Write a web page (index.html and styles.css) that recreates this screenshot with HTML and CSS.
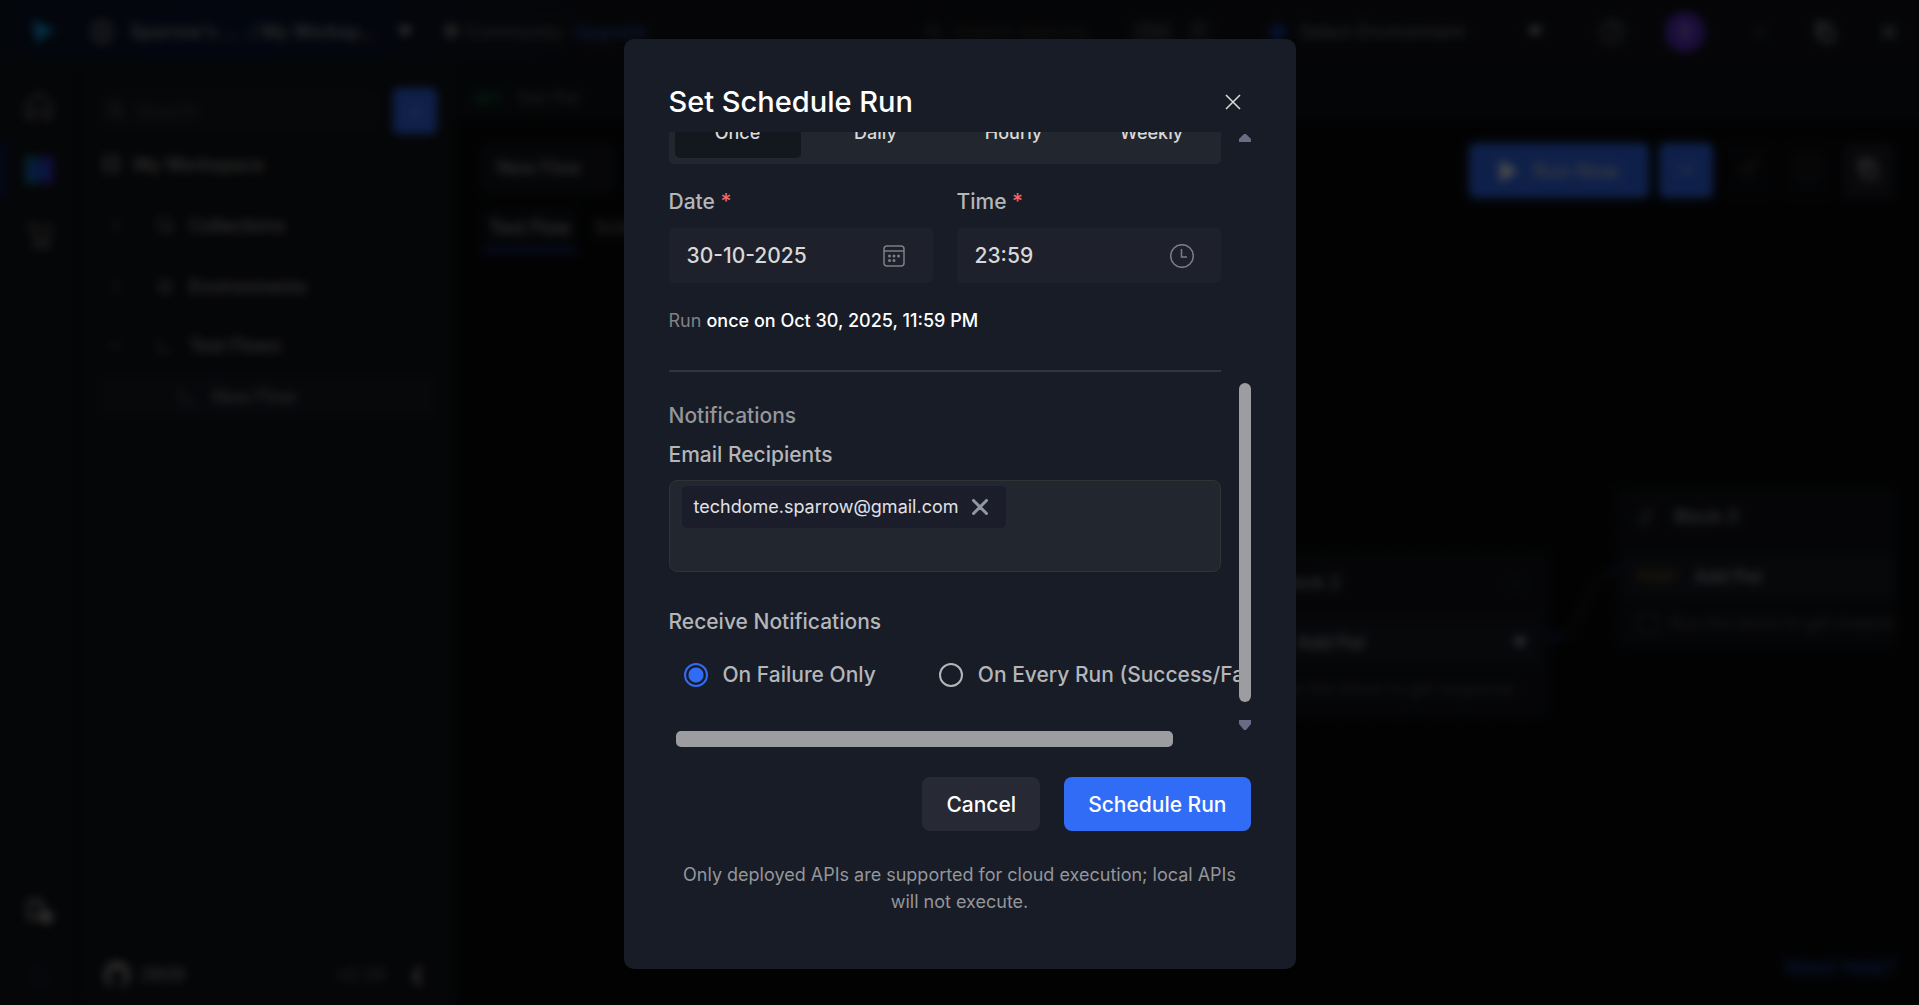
FILE: index.html
```html
<!DOCTYPE html>
<html lang="en">
<head>
    <meta charset="UTF-8">
    <meta name="viewport" content="width=device-width, initial-scale=1.0">
    <title>Sparrow - Set Schedule Run</title>
    <link rel="stylesheet" href="styles.css">
</head>
<body>
    <!-- App behind the dialog -->
    <div class="app" inert>
        <header class="topbar">
            <svg class="logo" width="26" height="26" viewBox="0 0 26 26"><path d="M2 1l23 11-11 4-8 9z" fill="#0ea5e9"/></svg>
            <svg class="icon ws-icon" width="26" height="26" viewBox="0 0 24 24"><circle cx="12" cy="12" r="10"/><path d="M8 6h8v12H8zM8 12h8"/></svg>
            <span class="crumb crumb-team">Sparrow's ...</span>
            <span class="crumb crumb-ws">/ My Worksp...</span>
            <span class="caret"></span>
            <span class="plan">&#9679; Community</span>
            <a class="upgrade" href="#">Upgrade</a>
            <div class="top-search">
                <svg class="icon" width="18" height="18" viewBox="0 0 24 24"><circle cx="10" cy="10" r="7"/><path d="M15 15l6 6"/></svg>
                <span>Search Sparrow</span>
                <kbd>Ctrl</kbd><kbd>F</kbd>
            </div>
            <div class="top-right">
                <span class="env-dot"></span>
                <span class="env-name">Select Environment</span>
                <span class="caret"></span>
                <svg class="icon help-icon" width="26" height="26" viewBox="0 0 24 24"><circle cx="12" cy="12" r="10"/><path d="M9 9a3 3 0 1 1 3 4v1M12 17v1"/></svg>
                <span class="avatar">S</span>
                <svg class="icon" width="20" height="20" viewBox="0 0 24 24"><path d="M4 12h16"/></svg>
                <svg class="icon bright" width="24" height="24" viewBox="0 0 24 24"><path d="M8 8h12v13H8zM4 16V3h12"/></svg>
                <svg class="icon bright" width="20" height="20" viewBox="0 0 24 24"><path d="M4 4l16 16M20 4L4 20"/></svg>
            </div>
        </header>

        <div class="workarea">
            <nav class="rail">
                <svg class="icon" width="32" height="32" viewBox="0 0 24 24"><path d="M3 10l9-8 9 8v11h-5v-6H8v6H3z"/></svg>
                <div class="rail-active">
                    <svg width="28" height="28" viewBox="0 0 28 28"><path d="M0 0h13v28H0z" fill="#0a7ea4"/><path d="M15 0h13v28H15z" fill="#3a2fd0"/><path d="M4 8h20v14H4z" fill="#1f4fd8"/></svg>
                </div>
                <svg class="icon" width="30" height="30" viewBox="0 0 24 24"><path d="M2 3h4l3 12h10l3-9H7"/><circle cx="10" cy="20" r="2"/><circle cx="18" cy="20" r="2"/></svg>
                <div class="rail-bottom">
                    <svg class="icon bright" width="30" height="30" viewBox="0 0 24 24"><path d="M4 3h10v14H4z"/><circle cx="18" cy="16" r="4" fill="#999"/></svg>
                    <span class="rail-dot"></span>
                </div>
            </nav>

            <aside class="sidebar">
                <div class="side-search">
                    <div class="search-box">
                        <svg class="icon" width="20" height="20" viewBox="0 0 24 24"><circle cx="10" cy="10" r="7"/><path d="M15 15l6 6"/></svg>
                        <span>Search</span>
                    </div>
                    <button class="add-btn">+</button>
                </div>
                <div class="side-title">
                    <svg class="icon bright" width="20" height="20" viewBox="0 0 24 24"><path d="M4 3h16v18H4zM4 12h16"/></svg>
                    My Workspace
                </div>
                <div class="side-row"><svg class="icon" width="18" height="18" viewBox="0 0 24 24"><path d="M9 4l8 8-8 8"/></svg><svg class="icon" width="20" height="20" viewBox="0 0 24 24"><path d="M3 4h13v13H3zM20 8v12H8"/></svg><span>Collections</span></div>
                <div class="side-row"><svg class="icon" width="18" height="18" viewBox="0 0 24 24"><path d="M9 4l8 8-8 8"/></svg><svg class="icon" width="20" height="20" viewBox="0 0 24 24"><circle cx="12" cy="12" r="8"/><path d="M8 8v8h8V8"/></svg><span>Environments</span></div>
                <div class="side-row open"><svg class="icon" width="18" height="18" viewBox="0 0 24 24"><path d="M4 9l8 8 8-8"/></svg><svg class="icon" width="20" height="20" viewBox="0 0 24 24"><path d="M4 2v17h16M4 10"/></svg><span>Test Flows</span></div>
                <div class="side-item"><svg class="icon" width="20" height="20" viewBox="0 0 24 24"><path d="M4 2v17h16"/></svg>New Flow</div>
                <div class="side-footer">
                    <svg width="30" height="30" viewBox="0 0 24 24"><path d="M12 1a11 11 0 0 0-4 21v-4c-4-5-3-11 4-11s8 6 4 11v4a11 11 0 0 0-4-21z" fill="#aaa"/></svg>
                    <span class="stars">2808</span>
                    <span class="version">v2.34</span>
                    <span>&#10094;</span>
                </div>
            </aside>

            <main class="main">
                <div class="tabstrip"><span class="get">GET</span><span>Get Pet</span></div>
                <div class="flow-head">
                    <span class="flow-name">New Flow</span>
                    <div class="flow-actions">
                        <button class="run-btn"><svg width="20" height="22" viewBox="0 0 20 22"><path d="M1 0l18 11L1 22z" fill="#fff"/></svg>Run Now</button>
                        <button class="run-more"><svg class="icon bright" width="22" height="22" viewBox="0 0 24 24"><path d="M5 9l7 7 7-7"/></svg></button>
                        <button class="ghost"><svg class="icon" width="24" height="24" viewBox="0 0 24 24"><path d="M21 3L3 12l6 2 3 7z"/></svg></button>
                        <button class="ghost"><svg class="icon" width="24" height="24" viewBox="0 0 24 24"><path d="M4 3h16v18H4z"/></svg></button>
                        <button class="ghost filled"><svg class="icon bright" width="24" height="24" viewBox="0 0 24 24"><path d="M8 8h12v13H8zM4 16V3h12v5"/></svg></button>
                    </div>
                </div>
                <div class="flow-tabs"><span class="current">Test Flow</span><span>Schedule</span></div>
                <div class="canvas">
                    <svg class="edge" width="70" height="80" viewBox="0 0 70 80"><path d="M2 74C40 74 30 6 68 6"/><circle cx="4" cy="74" r="4"/><circle cx="66" cy="6" r="4"/></svg>
                    <section class="node node-2">
                        <div class="node-head"><i>//</i><b>Block 2</b><span class="more">&#8943;</span></div>
                        <div class="node-api"><em>POST</em><b>Add Pet</b><span class="caret"></span></div>
                        <p>&#9711; &nbsp;Run the block to get response</p>
                    </section>
                    <section class="node node-3">
                        <div class="node-head"><i>//</i><b>Block 3</b></div>
                        <div class="node-api"><em>POST</em><b>Add Pet</b></div>
                        <p>&#9711; &nbsp;Run the block to get response</p>
                    </section>
                    <a class="help" href="#">Need Help?</a>
                </div>
            </main>
        </div>
    </div>

    <!-- Schedule dialog -->
    <div class="overlay">
        <form class="modal" role="dialog" aria-labelledby="modalTitle">
            <div class="modal-header">
                <h1 id="modalTitle">Set Schedule Run</h1>
                <button type="button" class="close-btn" aria-label="Close">
                    <svg width="16" height="16" viewBox="0 0 16 16"><path d="M1 1l14 14M15 1L1 15"/></svg>
                </button>
            </div>

            <div class="scroll-frame">
                <div class="pane">
                    <div class="tabs">
                        <button type="button" class="tab active">Once</button>
                        <button type="button" class="tab">Daily</button>
                        <button type="button" class="tab">Hourly</button>
                        <button type="button" class="tab">Weekly</button>
                    </div>

                    <div class="when">
                        <div>
                            <label for="runDate">Date <span class="required">*</span></label>
                            <div class="field">
                                <input type="text" id="runDate" value="30-10-2025">
                                <svg width="24" height="24" viewBox="0 0 24 24">
                                    <rect x="2" y="2" width="20" height="20" rx="3"/>
                                    <path d="M2 7h20"/>
                                    <g class="dots"><circle cx="7.5" cy="12" r="1.5"/><circle cx="12" cy="12" r="1.5"/><circle cx="16.5" cy="12" r="1.5"/><circle cx="7.5" cy="16.5" r="1.5"/><circle cx="12" cy="16.5" r="1.5"/></g>
                                </svg>
                            </div>
                        </div>
                        <div>
                            <label for="runTime">Time <span class="required">*</span></label>
                            <div class="field">
                                <input type="text" id="runTime" value="23:59">
                                <svg width="24" height="24" viewBox="0 0 24 24"><circle cx="12" cy="12" r="11.3"/><path d="M11.5 5v8H17"/></svg>
                            </div>
                        </div>
                    </div>

                    <p class="summary">Run <strong>once on Oct 30, 2025, 11:59 PM</strong></p>
                    <hr>

                    <h2>Notifications</h2>
                    <label for="recipients" class="recipients-label">Email Recipients</label>
                    <div class="recipients">
                        <span class="chip">
                            techdome.sparrow@gmail.com
                            <button type="button" aria-label="Remove recipient">
                                <svg width="16" height="16" viewBox="0 0 16 16"><path d="M1.5 1.5l13 13M14.5 1.5l-13 13"/></svg>
                            </button>
                        </span>
                        <input type="text" id="recipients">
                    </div>

                    <h3>Receive Notifications</h3>
                    <div class="radios">
                        <input type="radio" name="notify" id="onFailure" checked>
                        <label for="onFailure">On Failure Only</label>
                        <input type="radio" name="notify" id="onEvery">
                        <label for="onEvery">On Every Run (Success/Failure)</label>
                    </div>
                </div>
                <div class="vbar">
                    <svg width="12" height="8" viewBox="0 0 12 8"><path d="M0 8V5l5-5h2l5 5v3z"/></svg>
                    <span class="vthumb"></span>
                    <svg width="12" height="10" viewBox="0 0 12 10"><path d="M0 0h12v4l-5 6H5L0 4z"/></svg>
                </div>
                <div class="hbar"><span class="hthumb"></span></div>
            </div>

            <div class="actions">
                <button type="button" class="btn cancel">Cancel</button>
                <button type="submit" class="btn primary">Schedule Run</button>
            </div>
            <p class="note">Only deployed APIs are supported for cloud execution; local APIs will not execute.</p>
        </form>
    </div>
</body>
</html>
```

FILE: styles.css
```css
* {
    box-sizing: border-box;
}
body {
    margin: 0;
    font-family: Inter, "Liberation Sans", sans-serif;
    background: #08090b;
    color: #ccc;
    overflow: hidden;
}
button, input {
    font-family: inherit;
    border: none;
    padding: 0;
    margin: 0;
}
button {
    cursor: pointer;
}
a {
    text-decoration: none;
}

/* App */
.app {
    height: 100vh;
    display: flex;
    flex-direction: column;
    font-size: 18px;
}
.icon {
    fill: none;
    stroke: #777;
    stroke-width: 2;
    flex: none;
}
.icon.bright {
    stroke: #ccc;
}
.caret {
    border: 7px solid transparent;
    border-top: 9px solid #ddd;
    border-bottom: 0;
}
.topbar {
    height: 63px;
    flex: none;
    display: flex;
    align-items: center;
    padding: 0 20px 0 31px;
    white-space: nowrap;
    background: radial-gradient(ellipse 400px 120px at 210px 30px, #0a1636, #111318);
}
.ws-icon {
    margin: 0 15px 0 32px;
}
.crumb {
    font-weight: 500;
    color: #aaa;
}
.crumb-team {
    width: 120px;
}
.crumb-ws {
    width: 148px;
}
.plan {
    color: #777;
    width: 130px;
    margin-left: 31px;
}
.upgrade {
    color: #3560c8;
}
.top-search {
    flex: none;
    width: 312px;
    height: 38px;
    margin-left: auto;
    padding: 0 12px;
    display: flex;
    align-items: center;
    gap: 10px;
    color: #444;
    background: #101216;
}
.top-search span {
    flex: 1;
}
kbd {
    font-family: inherit;
    color: #777;
    background: #1c1e24;
    padding: 2px 8px;
}
.top-right {
    display: flex;
    align-items: center;
    gap: 42px;
    margin-left: 45px;
}
.env-dot {
    width: 16px;
    height: 16px;
    border-radius: 50%;
    background: #1a3fa8;
    margin-right: -28px;
}
.env-name {
    width: 186px;
    color: #888;
}
.help-icon {
    margin-left: 15px;
}
.avatar {
    width: 40px;
    height: 40px;
    margin: 0 4px 0 -2px;
    border-radius: 50%;
    background: #5b2fc9;
    color: #ccc;
    text-align: center;
    line-height: 40px;
}
.workarea {
    flex: 1;
    min-height: 0;
    display: flex;
}
.rail {
    width: 80px;
    padding-top: 27px;
    display: flex;
    flex-direction: column;
    align-items: center;
    background: #121419;
    border-right: 2px solid #090a0c;
}
.rail-active {
    width: 100%;
    height: 56px;
    margin: 20px 0 22px;
    display: flex;
    align-items: center;
    justify-content: center;
    border-left: 9px solid #0d1c47;
}
.rail-active svg {
    margin-right: 9px;
}
.rail-bottom {
    margin: auto 0 14px;
    display: flex;
    flex-direction: column;
    align-items: center;
    gap: 36px;
}
.rail-dot {
    width: 28px;
    height: 28px;
    border-radius: 50%;
    background: #171a24;
}
.sidebar {
    width: 375px;
    padding: 25px 17px 0 16px;
    display: flex;
    flex-direction: column;
    font-weight: 500;
    background: #121419;
    border-right: 1px solid #1a1c21;
}
.side-search {
    display: flex;
    gap: 14px;
}
.search-box {
    flex: 1;
    height: 46px;
    padding: 0 10px;
    display: flex;
    align-items: center;
    gap: 10px;
    color: #444;
    background: #171a20;
    border-radius: 6px;
}
.add-btn {
    width: 44px;
    color: #aac;
    font-size: 22px;
    background: #316cf6;
    border-radius: 6px;
}
.side-title, .side-row {
    display: flex;
    align-items: center;
    height: 61px;
    border-bottom: 1px solid #191b20;
    color: #aaa;
}
.side-title {
    gap: 13px;
    padding-left: 5px;
}
.side-row {
    gap: 14px;
    padding-left: 10px;
}
.side-row .icon + .icon {
    margin-left: 17px;
}
.side-row.open {
    height: 56px;
    border: none;
}
.side-item {
    height: 46px;
    display: flex;
    align-items: center;
    gap: 14px;
    padding-left: 82px;
    color: #888;
    background: #181b24;
    border-radius: 4px;
}
.side-footer {
    margin-top: auto;
    height: 62px;
    display: flex;
    align-items: center;
    gap: 8px;
    padding: 0 12px 0 6px;
    border-top: 1px solid #1c1e23;
}
.stars {
    color: #999;
}
.version {
    margin-left: auto;
    margin-right: 16px;
    color: #666;
}
.main {
    flex: 1;
    min-width: 0;
    display: flex;
    flex-direction: column;
    color: #999;
}
.tabstrip {
    height: 57px;
    padding: 12px 18px 0;
    display: flex;
    gap: 12px;
    align-items: center;
    background: #101217;
    color: #666;
}
.get {
    color: #138a4c;
    font-size: 16px;
}
.flow-head {
    display: flex;
    justify-content: space-between;
    padding: 23px 26px 0;
}
.flow-name {
    width: 134px;
    height: 50px;
    padding: 14px 16px;
    color: #bbb;
    background: #14161d;
}
.flow-actions {
    display: flex;
    gap: 10px;
}
.flow-actions button {
    width: 50px;
    height: 55px;
    background: #0d0e12;
    border-radius: 6px;
}
.flow-actions .ghost:not(.filled) .icon {
    stroke: #444;
}
.flow-actions .run-btn {
    width: 180px;
    display: flex;
    align-items: center;
    justify-content: center;
    gap: 14px;
    color: #ccc;
    font-size: 20px;
    font-weight: 500;
}
.flow-actions .run-more {
    width: 54px;
}
.flow-actions .run-btn, .flow-actions .run-more {
    background: #316cf6;
}
.flow-actions .filled {
    background: #1e1e28;
}
.flow-tabs {
    display: flex;
    gap: 12px;
    padding: 9px 28px;
}
.flow-tabs span {
    padding: 10px 6px;
}
.flow-tabs .current {
    color: #ccc;
    background: #111319;
    border-bottom: 5px solid #1a2d80;
}
.canvas {
    flex: 1;
    position: relative;
    overflow: hidden;
    margin-right: 24px;
    background: radial-gradient(circle, #12121a 1px, transparent 2px) 0 0 / 30px 30px;
}
.node {
    position: absolute;
    width: 328px;
    height: 162px;
    background: #111318;
    border-radius: 6px;
}
.node-2 {
    left: 765px;
    top: 291px;
}
.node-3 {
    left: 1162px;
    top: 225px;
}
.edge {
    position: absolute;
    left: 1095px;
    top: 302px;
    fill: #1c2c80;
}
.edge path {
    fill: none;
    stroke: #333;
    stroke-width: 2;
}
.node-head, .node-api {
    display: flex;
    align-items: center;
    gap: 22px;
    padding: 0 22px;
    height: 58px;
}
.node-api {
    height: 44px;
    margin: 9px 6px 0;
    padding: 0 15px;
    gap: 16px;
    background: #181b24;
}
.node b {
    font-weight: 500;
    color: #aaa;
}
.node em {
    color: #a8841c;
    font-style: normal;
    font-size: 15px;
}
.node .more, .node .caret {
    margin-left: auto;
}
.node p {
    margin: 15px 20px;
    font-size: 17px;
    color: #555;
    white-space: nowrap;
}
.help {
    position: absolute;
    right: 0;
    bottom: 26px;
    font-size: 20px;
    color: #2a55cc;
}

/* Modal */
.overlay {
    position: fixed;
    inset: 0;
    display: flex;
    justify-content: center;
    align-items: flex-start;
    padding-top: 39px;
    background: rgba(0, 0, 0, 0.7);
    backdrop-filter: blur(5px);
}
.modal {
    width: 672px;
    padding: 45px 45px 54px;
    background: #181c26;
    border-radius: 10px;
}
.modal-header {
    display: flex;
    justify-content: space-between;
    align-items: center;
    margin-bottom: 12px;
}
.modal-header h1 {
    margin: 0;
    font-size: 29px;
    line-height: 36px;
    font-weight: 500;
    color: #fff;
}
.close-btn {
    width: 36px;
    height: 36px;
    background: none;
}
.close-btn svg {
    display: block;
    margin: auto;
    stroke: #ddd;
    stroke-width: 1.5;
}
.scroll-frame {
    display: grid;
    grid-template-columns: minmax(0, 1fr) 12px;
    grid-template-rows: minmax(0, 1fr) 16px;
    height: calc(100vh - 390px);
}
/* content is kept at the end of the scroll range */
.pane {
    display: flex;
    flex-direction: column;
    justify-content: flex-end;
    overflow: hidden;
    padding: 0 18px 41px 0;
    font-size: 21px;
    line-height: 30px;
    font-weight: 500;
    color: #b4b6ba;
}
.tabs {
    display: grid;
    grid-template-columns: repeat(4, 1fr);
    gap: 12px;
    padding: 6px;
    margin-bottom: 23px;
    background: #22262f;
    border-radius: 5px;
}
.tab {
    height: 51px;
    font-size: 18px;
    font-weight: 500;
    color: #d8d8d8;
    background: none;
    border-radius: 5px;
}
.tab.active {
    background: #13181f;
}
.when {
    display: grid;
    grid-template-columns: repeat(2, minmax(0, 1fr));
    gap: 24px;
    margin-bottom: 24px;
}
.when label {
    display: block;
    margin-bottom: 11px;
}
.required {
    color: #f26868;
}
.field {
    display: flex;
    align-items: center;
    height: 55px;
    padding: 0 27px 0 18px;
    background: #1e212b;
    border-radius: 5px;
}
.field input {
    flex: 1;
    min-width: 0;
    font-size: 21px;
    font-weight: 500;
    color: #d8d8d8;
    background: none;
}
.field svg {
    flex: none;
    fill: none;
    stroke: #7d7f86;
    stroke-width: 1.5;
}
.field .dots {
    fill: #7d7f86;
    stroke: none;
}
.summary {
    margin: 0 0 36px;
    font-size: 18px;
    line-height: 27px;
    font-weight: 400;
    color: #808288;
}
.summary strong {
    font-weight: 500;
    color: #fff;
}
hr {
    width: 100%;
    height: 2px;
    flex: none;
    margin: 0 0 29px;
    border: none;
    background: #31353f;
}
h2, h3 {
    margin: 0;
    font-size: 21px;
    line-height: 30px;
    font-weight: 500;
}
h2 {
    margin-bottom: 9px;
    color: #94969b;
}
.recipients-label {
    margin-bottom: 10px;
}
.recipients {
    display: flex;
    align-items: flex-start;
    height: 92px;
    flex: none;
    padding: 5px 12px;
    margin-bottom: 35px;
    background: #22262f;
    border: 1px solid #313236;
    border-radius: 8px;
}
.recipients input {
    flex: 1;
    min-width: 0;
    height: 42px;
    background: none;
    color: #d8dae0;
    font-size: 18px;
}
.chip {
    display: flex;
    align-items: center;
    gap: 14px;
    height: 42px;
    padding: 0 18px 0 12px;
    font-size: 18px;
    font-weight: 400;
    color: #e0e2e8;
    background: #1b1d2a;
    border-radius: 5px;
}
.chip button {
    background: none;
}
.chip svg {
    display: block;
    stroke: #8f97a3;
    stroke-width: 3;
    stroke-linecap: round;
}
h3 {
    margin-bottom: 23px;
}
.radios {
    display: flex;
    align-items: center;
    gap: 15px;
    padding-left: 15px;
    white-space: nowrap;
}
.radios input {
    appearance: none;
    flex: none;
    width: 24px;
    height: 24px;
    border: 2px solid #b4b6ba;
    border-radius: 50%;
}
.radios input:checked {
    border-color: #316cf6;
    background: radial-gradient(circle, #316cf6 7px, transparent 8px);
}
.radios label + input {
    margin-left: 48px;
}
.vbar {
    display: flex;
    flex-direction: column;
    justify-content: space-between;
    padding: 2px 0 1px;
}
.vbar svg {
    display: block;
    fill: #6b6b85;
}
.vthumb {
    height: 319px;
    margin-top: 223px;
    background: #9c9da1;
    border-radius: 6px;
}
.hbar {
    padding: 0 66px 0 7px;
}
.hthumb {
    display: block;
    height: 16px;
    background: #9c9da1;
    border-radius: 5px;
}
.actions {
    display: flex;
    justify-content: flex-end;
    gap: 24px;
    margin: 30px 0;
}
.btn {
    height: 54px;
    padding: 0 24px;
    font-size: 21px;
    font-weight: 500;
    color: #fff;
    border-radius: 8px;
}
.cancel {
    background: #272935;
}
.primary {
    background: #316cf6;
}
.note {
    margin: 0;
    font-size: 18px;
    line-height: 27px;
    text-align: center;
    color: #94969b;
}
```
